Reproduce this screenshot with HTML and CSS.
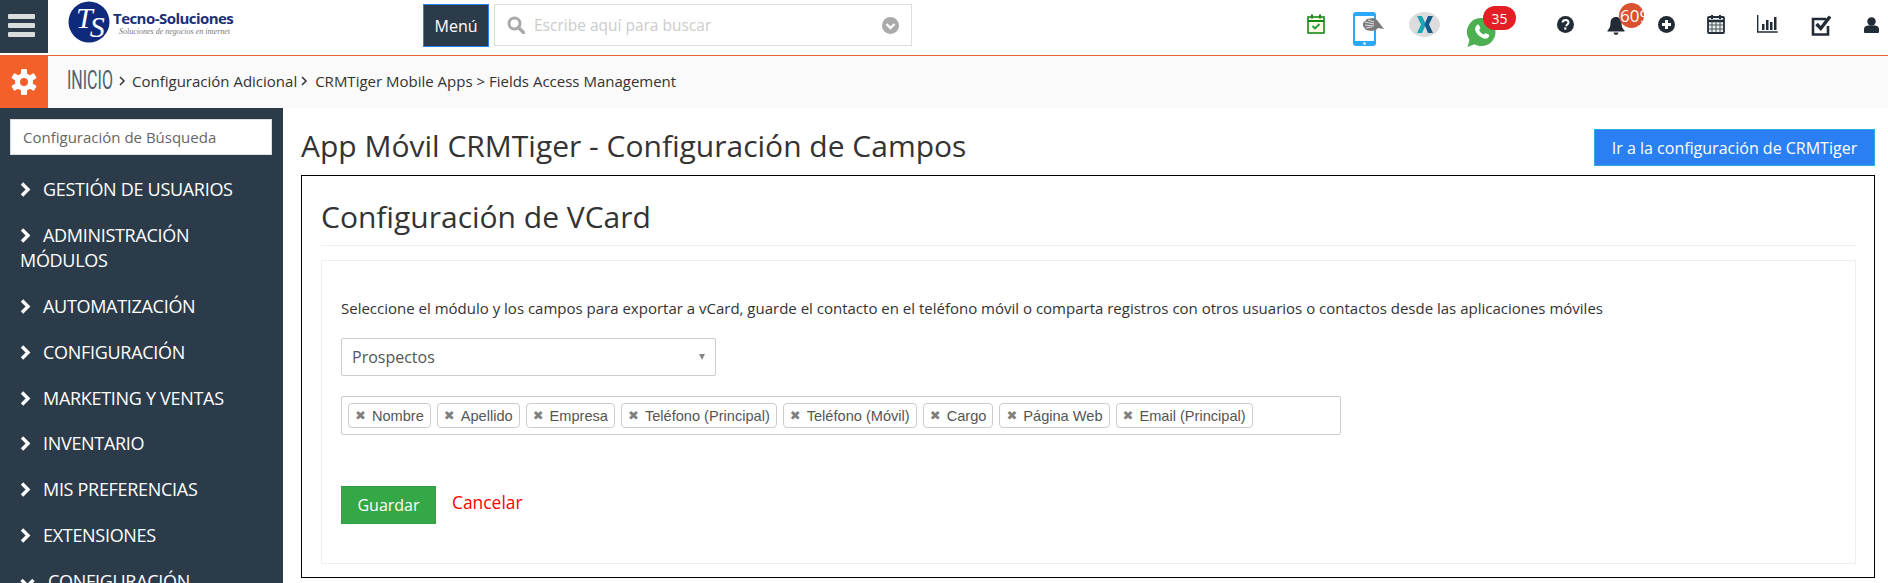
FILE: index.html
```html
<!DOCTYPE html>
<html lang="es">
<head>
<meta charset="utf-8">
<title>CRMTiger - Configuración de Campos</title>
<link rel="stylesheet" href="styles.css">
</head>
<body>
<header class="topbar">
  <div class="burger"><span></span><span></span><span></span></div>
  <div class="logo">
    <svg class="logo-mark" viewBox="0 0 42 42" width="42" height="42"><circle cx="21" cy="21" r="20.500" fill="#0f2a7c"/><text x="8" y="27" class="logo-ts">T<tspan dx="-3" dy="9">S</tspan></text></svg>
    <div class="logo-text"><div class="logo-name">Tecno-Soluciones</div><div class="logo-sub">Soluciones de negocios en internet</div></div>
  </div>
  <div class="menu-btn">Menú</div>
  <div class="searchbox">
    <svg class="s-ico" viewBox="0 0 18 18" width="18" height="18"><circle cx="7.500" cy="7.500" r="5.500" fill="none" stroke="#aaa" stroke-width="3"/><path d="M11.500 11.500l5 5" stroke="#aaa" stroke-width="3.400" stroke-linecap="round"/></svg>
    <span class="s-ph">Escribe aquí para buscar</span>
    <svg class="s-drop" viewBox="0 0 17 17" width="17" height="17"><circle cx="8.500" cy="8.500" r="8.500" fill="#aaa"/><path d="M4.500 7l4 4 4-4" fill="none" stroke="#fff" stroke-width="2.400"/></svg>
  </div>
  <div class="tools">
    <svg class="tool t1" viewBox="0 0 18 20" width="18" height="20"><rect x="1" y="3" width="16" height="16" fill="#fdfbe6" stroke="#178a1a" stroke-width="1.600"/><path d="M1 7h16" stroke="#178a1a" stroke-width="2"/><path d="M5 0.500v4M13 0.500v4" stroke="#178a1a" stroke-width="2"/><path d="M5.500 12l2.500 2.500 4.500-4.500" fill="none" stroke="#1c9c3a" stroke-width="1.800"/></svg>
    <svg class="tool t2" viewBox="0 0 31 34" width="31" height="34"><rect x="0" y="0" width="23" height="34" rx="3" fill="#2aa9fb"/><rect x="2" y="4" width="19" height="25" fill="#fff"/><circle cx="11.500" cy="31.500" r="1.300" fill="#fff"/><path d="M10 11l4-4 6-1 4 2 7 9-6-1-2 2-5 1-5-1-3-4z" fill="#7a7a7a"/><path d="M12 10l9 2M12 13l9 1M15 8l6 2M13 16l6-1" stroke="#e0e0e0" stroke-width="1"/></svg>
    <svg class="tool t3" viewBox="0 0 31 25" width="31" height="25"><ellipse cx="15.500" cy="12.500" rx="15.500" ry="12.500" fill="#dcdcdc"/><path d="M8 4h5l4 8.500-4 8.500H8l4-8.500z" fill="#18a7b5"/><path d="M24 4h-5l-3.500 8.500 3.500 8.500h5l-4-8.500z" fill="#135a8c"/></svg>
    <div class="tool t4">
      <svg viewBox="0 0 31 31" width="31" height="31"><path d="M15.500 1a14 14 0 0 1 0 28c-2.500 0-5-.7-7-1.800L1.500 30l2-7A14 14 0 0 1 15.500 1z" fill="#4caf50"/><path d="M10.500 8c1-.8 2-.8 2.500 0l1.300 2.800c.2.600-.8 1.700-1.200 2.300.9 2 2.500 3.500 4.600 4.500.6-.5 1.500-1.700 2.100-1.400l2.900 1.400c.7.500.5 1.500 0 2.400-1.500 2.200-4 2-6.500.8-3.500-1.600-6-4.300-7-7.500-.5-1.800.2-3.300 1.300-4.300z" fill="#fff"/></svg>
      <span class="badge badge-red">35</span>
    </div>
    <svg class="tool t5" viewBox="0 0 17 17" width="17" height="17"><circle cx="8.500" cy="8.500" r="8.500" fill="#222c36"/><path d="M5.600 6.500c.2-3.400 5.900-3.400 5.900 0 0 2-2.300 2-2.300 3.700" fill="none" stroke="#fff" stroke-width="2"/><rect x="7.200" y="11.400" width="2.200" height="2.200" fill="#fff"/></svg>
    <div class="tool t6">
      <svg viewBox="0 0 18 19" width="18" height="19"><path d="M9 1c3.500 0 5.500 2.500 5.500 6 0 4 1.500 6 3 7.500v1H.5v-1C2 13 3.500 11 3.500 7 3.500 3.500 5.500 1 9 1z" fill="#222c36"/><path d="M6.500 16.500h5a2.500 2.500 0 0 1-5 0z" fill="#222c36"/></svg>
      <span class="badge badge-org"><span class="badge-clip">609</span></span>
    </div>
    <svg class="tool t7" viewBox="0 0 17 17" width="17" height="17"><circle cx="8.500" cy="8.500" r="8.500" fill="#222c36"/><path d="M8.500 4v9M4 8.500h9" stroke="#fff" stroke-width="3"/></svg>
    <svg class="tool t8" viewBox="0 0 18 20" width="18" height="20"><rect x="1" y="3" width="16" height="16" rx="1" fill="#e4f1f3" stroke="#222c36" stroke-width="1.800"/><path d="M1 7h16" stroke="#222c36" stroke-width="2.500"/><path d="M5 1v4M13 1v4" stroke="#222c36" stroke-width="2"/><path d="M5 7v12M9 7v12M13 7v12M1 11h16M1 15h16" stroke="#444" stroke-width=".9"/></svg>
    <svg class="tool t9" viewBox="0 0 21 18" width="21" height="18"><path d="M.7 0v17h20" fill="none" stroke="#222c36" stroke-width="1.400"/><path d="M5 9h2.500v6H5zM9 5h2.500v10H9zM13 7h2.500v8H13zM17 2h2.500v13H17z" fill="#222c36"/></svg>
    <svg class="tool t10" viewBox="0 0 21 21" width="21" height="21"><path d="M15 4H2v15.500h15V11" fill="none" stroke="#222c36" stroke-width="2.600"/><path d="M5.500 9l4.300 4.500L19 1.500" fill="none" stroke="#222c36" stroke-width="3.400"/></svg>
    <svg class="tool t11" viewBox="0 0 16 17" width="15" height="16"><circle cx="8" cy="4.800" r="4.500" fill="#222c36"/><path d="M0 16v-3c0-3 3-4 4.500-4h7c1.500 0 4.500 1 4.500 4v3c0 .6-.5 1-1 1H1c-.5 0-1-.4-1-1z" fill="#222c36"/></svg>
  </div>
</header>

<nav class="crumbs">
  <div class="gear-box">
    <svg viewBox="0 0 26 26" width="26" height="26"><g fill="#fff"><circle cx="13" cy="13" r="9"/><rect x="10" y="0" width="6" height="26" rx="1"/><rect x="10" y="0" width="6" height="26" rx="1" transform="rotate(60 13 13)"/><rect x="10" y="0" width="6" height="26" rx="1" transform="rotate(120 13 13)"/></g><circle cx="13" cy="13" r="4" fill="#f36029"/></svg>
  </div>
  <div class="crumb-line">
    <span class="home"><span class="home-text">INICIO</span></span>
    <svg class="crumb-chev" viewBox="0 0 7 10" width="7" height="10"><path d="M1 1l4 4-4 4" fill="none" stroke="#333" stroke-width="1.500"/></svg>
    <span class="crumb crumb-a">Configuración Adicional</span>
    <svg class="crumb-chev chev-b" viewBox="0 0 7 10" width="7" height="10"><path d="M1 1l4 4-4 4" fill="none" stroke="#333" stroke-width="1.500"/></svg>
    <span class="crumb crumb-b">CRMTiger Mobile Apps &gt; Fields Access Management</span>
  </div>
</nav>

<div class="shell">
  <aside class="sidebar">
    <div class="side-search">Configuración de Búsqueda</div>
    <ul class="side-list">
      <li class="side-item"><svg class="chev" viewBox="0 0 12 15" width="12" height="15"><path d="M2 1.500l6 6-6 6" fill="none" stroke="#fff" stroke-width="3.400"/></svg>GESTIÓN DE USUARIOS</li>
      <li class="side-item"><svg class="chev" viewBox="0 0 12 15" width="12" height="15"><path d="M2 1.500l6 6-6 6" fill="none" stroke="#fff" stroke-width="3.400"/></svg>ADMINISTRACIÓN MÓDULOS</li>
      <li class="side-item"><svg class="chev" viewBox="0 0 12 15" width="12" height="15"><path d="M2 1.500l6 6-6 6" fill="none" stroke="#fff" stroke-width="3.400"/></svg>AUTOMATIZACIÓN</li>
      <li class="side-item"><svg class="chev" viewBox="0 0 12 15" width="12" height="15"><path d="M2 1.500l6 6-6 6" fill="none" stroke="#fff" stroke-width="3.400"/></svg>CONFIGURACIÓN</li>
      <li class="side-item"><svg class="chev" viewBox="0 0 12 15" width="12" height="15"><path d="M2 1.500l6 6-6 6" fill="none" stroke="#fff" stroke-width="3.400"/></svg>MARKETING Y VENTAS</li>
      <li class="side-item"><svg class="chev" viewBox="0 0 12 15" width="12" height="15"><path d="M2 1.500l6 6-6 6" fill="none" stroke="#fff" stroke-width="3.400"/></svg>INVENTARIO</li>
      <li class="side-item"><svg class="chev" viewBox="0 0 12 15" width="12" height="15"><path d="M2 1.500l6 6-6 6" fill="none" stroke="#fff" stroke-width="3.400"/></svg>MIS PREFERENCIAS</li>
      <li class="side-item"><svg class="chev" viewBox="0 0 12 15" width="12" height="15"><path d="M2 1.500l6 6-6 6" fill="none" stroke="#fff" stroke-width="3.400"/></svg>EXTENSIONES</li>
      <li class="side-item"><svg class="chev chev-down" viewBox="0 0 15 12" width="15" height="12"><path d="M1.500 2l6 6 6-6" fill="none" stroke="#fff" stroke-width="3.400"/></svg>CONFIGURACIÓN</li>
    </ul>
  </aside>

  <main class="main">
    <div class="title-row">
      <h1 class="page-title">App Móvil CRMTiger - Configuración de Campos</h1>
      <div class="btn-blue">Ir a la configuración de CRMTiger</div>
    </div>
    <section class="card">
      <h2 class="card-title">Configuración de VCard</h2>
      <div class="panel">
        <p class="desc">Seleccione el módulo y los campos para exportar a vCard, guarde el contacto en el teléfono móvil o comparta registros con otros usuarios o contactos desde las aplicaciones móviles</p>
        <div class="select"><span>Prospectos</span><i class="caret"></i></div>
        <div class="tags">
          <span class="tag"><b class="x">✖</b>Nombre</span>
          <span class="tag"><b class="x">✖</b>Apellido</span>
          <span class="tag"><b class="x">✖</b>Empresa</span>
          <span class="tag"><b class="x">✖</b>Teléfono (Principal)</span>
          <span class="tag"><b class="x">✖</b>Teléfono (Móvil)</span>
          <span class="tag"><b class="x">✖</b>Cargo</span>
          <span class="tag"><b class="x">✖</b>Página Web</span>
          <span class="tag"><b class="x">✖</b>Email (Principal)</span>
        </div>
        <div class="actions">
          <div class="btn-green">Guardar</div>
          <span class="cancel">Cancelar</span>
        </div>
      </div>
    </section>
  </main>
</div>
</body>
</html>
```

FILE: styles.css
```css
* { box-sizing: border-box; }
html, body { margin: 0; height: 583px; overflow: hidden; background: #fff; }
body { font-family: "Open Sans", sans-serif; color: #333; }

.topbar { display: flex; align-items: flex-start; height: 56px; border-bottom: 1px solid #e2603a; background: #fff; }
.burger { width: 48px; height: 53px; background: #2c3b49; display: flex; flex-direction: column; gap: 4px; padding: 14px 8px 0 8px; }
.burger span { display: block; width: 27px; height: 5px; border-radius: 1px; background: #d9dddc; }
.logo { width: 375px; display: flex; padding: 1px 0 0 20px; }
.logo-mark { display: block; flex: none; }
.logo-ts { font-family: "Liberation Serif", serif; font-style: italic; font-size: 30px; fill: #fff; }
.logo-text { margin-left: 3px; }
.logo-name { font-family: "Open Sans", sans-serif; font-weight: 700; font-size: 15px; line-height: 20px; margin-top: 7px; color: #1b2f78; letter-spacing: -0.55px; white-space: nowrap; }
.logo-sub { font-family: "Liberation Serif", serif; font-style: italic; font-size: 8px; line-height: 10px; margin: -1px 0 0 6px; color: #777; white-space: nowrap; }
.menu-btn { width: 66px; height: 43px; margin-top: 4px; background: #2c3b49; border: 1px solid #2a7ff3; color: #fff; font-size: 16px; display: flex; align-items: center; justify-content: center; }
.searchbox { width: 418px; height: 42px; margin: 4px 0 0 5px; border: 1px solid #ddd; display: flex; align-items: center; padding: 0 12px; }
.s-ico { flex: none; margin-right: 9px; }
.s-ph { flex: 1; color: #ccc; font-size: 15.500px; }
.s-drop { flex: none; }

.tools { display: flex; align-items: flex-start; margin-left: 395px; }
.tool { display: block; flex: none; position: relative; }
.tool svg { display: block; }
.t1 { margin-top: 14px; }
.t2 { margin: 12px 0 0 28px; }
.t3 { margin: 12px 0 0 25px; }
.t4 { margin: 17px 0 0 26px; width: 31px; height: 31px; }
.t5 { margin: 16px 0 0 60px; }
.t6 { margin: 16px 0 0 33px; width: 18px; height: 19px; }
.t7 { margin: 16px 0 0 33px; }
.t8 { margin: 14px 0 0 32px; }
.t9 { margin: 15px 0 0 32px; }
.t10 { margin: 15px 0 0 33px; }
.t11 { margin: 17px 0 0 32px; }
.badge { position: absolute; color: #fff; display: flex; align-items: center; overflow: hidden; }
.badge-red { left: 17px; top: -11px; width: 33px; height: 24px; border-radius: 12px; background: #e31e24; font-size: 14px; justify-content: center; }
.badge-org { left: 12px; top: -13px; width: 25px; height: 25px; border-radius: 50%; background: #d9512f; font-size: 17px; padding-left: 1px; }
.badge-clip { white-space: nowrap; }

.crumbs { display: flex; align-items: stretch; height: 52px; background: #fafafa; }
.gear-box { width: 48px; height: 52px; background: #f36029; display: flex; align-items: center; justify-content: center; }
.crumb-line { display: flex; align-items: center; padding-bottom: 2px; }
.home { display: block; width: 45px; margin-left: 19px; font-family: "Liberation Sans Narrow", "Roboto", sans-serif; font-size: 25px; line-height: 30px; color: #4e5f70; white-space: nowrap; }
.home-text { display: inline-block; transform: scaleX(0.64); transform-origin: left center; }
.crumb-chev { margin-left: 7px; flex: none; }
.chev-b { margin-left: 4px; }
.crumb { font-size: 15px; color: #333; white-space: nowrap; }
.crumb-a { margin-left: 6px; }
.crumb-b { margin-left: 7px; }

.shell { display: flex; height: 475px; }
.sidebar { width: 283px; flex: none; background: #2c3b49; padding: 11px 0 0; overflow: hidden; }
.side-search { width: 262px; height: 36px; margin-left: 10px; background: #fff; border: 1px solid #ddd; padding-left: 12px; font-size: 15px; line-height: 34px; color: #666; }
.side-list { list-style: none; margin: 12px 0 0; padding: 0; }
.side-item { padding: 10.400px 30px 10.400px 20px; color: #fff; font-size: 18px; line-height: 25px; letter-spacing: -0.3px; }
.chev { display: inline-block; margin-right: 11px; vertical-align: -1px; }
.chev-down { margin-right: 13px; vertical-align: -2px; }

.main { flex: 1; padding: 21px 13px 0 18px; min-width: 0; }
.title-row { display: flex; justify-content: space-between; align-items: center; height: 37px; margin-bottom: 9px; }
.page-title { margin: 0 0 3px; font-size: 30px; line-height: 36px; font-weight: 400; color: #333; }
.btn-blue { width: 281px; height: 37px; background: #2a7ff3; border: 1px solid #33a7e0; color: #fff; font-size: 16px; display: flex; align-items: center; justify-content: center; }

.card { height: 403px; border: 1px solid #000; padding: 0 18px 0 19px; }
.card-title { margin: 0 0 14px; height: 70px; border-bottom: 1px solid #eee; font-size: 30px; font-weight: 400; color: #333; line-height: 40px; padding-top: 21px; }
.panel { height: 304px; border: 1px solid #eee; padding: 0 0 0 19px; }
.desc { margin: 37px 0 0; font-size: 15px; line-height: 20px; color: #333; white-space: nowrap; }
.select { width: 375px; height: 38px; margin-top: 20px; border: 1px solid #ccc; border-radius: 2px; display: flex; align-items: center; justify-content: space-between; padding: 0 10px; font-size: 16px; color: #555; }
.caret { width: 0; height: 0; border-left: 3.500px solid transparent; border-right: 3.500px solid transparent; border-top: 6px solid #888; }
.tags { width: 1000px; height: 39px; margin-top: 20px; border: 1px solid #ccc; border-radius: 2px; display: flex; align-items: center; gap: 6px; padding: 0 6px; }
.tag { display: flex; align-items: center; height: 25px; border: 1px solid #ccc; border-radius: 4px; padding: 0 6px; font-family: "Liberation Sans", Arial, sans-serif; font-size: 14.600px; color: #555; white-space: nowrap; }
.x { font-family: "DejaVu Sans", sans-serif; font-size: 13px; font-weight: 400; color: #808080; margin-right: 6px; }
.actions { display: flex; align-items: flex-start; margin-top: 51px; }
.btn-green { width: 95px; height: 38px; background: #34a847; border: 1px solid #2f9e44; color: #fff; font-size: 16px; display: flex; align-items: center; justify-content: center; }
.cancel { margin-left: 16px; color: #f00; font-size: 17.400px; line-height: 24px; margin-top: 4px; }
```
